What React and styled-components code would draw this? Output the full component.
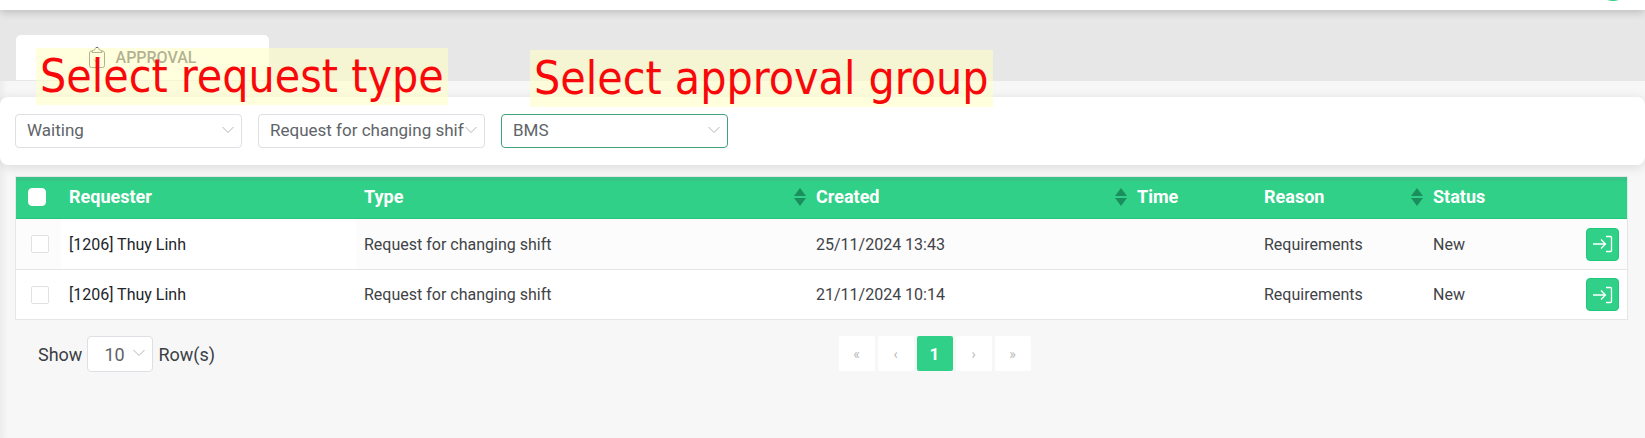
import styled, { createGlobalStyle } from 'styled-components'
import { useState } from 'react'

const GlobalStyle = createGlobalStyle`
  * {
    box-sizing: border-box;
  }
  body {
    margin: 0;
    background: #f7f7f7;
    color: #3b3f44;
    font-family: Roboto, "Liberation Sans", sans-serif;
    font-size: 16px;
  }
  button, select {
    font-family: inherit;
  }
`;

const Page = styled.div`
  position: relative;
  min-height: 100vh;
  background: linear-gradient(to right, #ededed, #f7f7f7 8px);
`;

const TopBar = styled.header`
  position: relative;
  display: flex;
  align-items: flex-end;
  justify-content: flex-end;
  height: 10px;
  padding: 0 16px 9px;
  background: white;
  box-shadow: 0 2px 8px rgba(0, 0, 0, 0.2);
`;

const Avatar = styled.div`
  flex: none;
  width: 32px;
  height: 32px;
  border-radius: 50%;
  background: #2fcf87;
`;

const TabBar = styled.nav`
  display: flex;
  padding: 25px 16px 1px;
  background: #e7e7e7;
`;

const Tab = styled.a`
  display: flex;
  align-items: flex-start;
  justify-content: center;
  gap: 11px;
  width: 253px;
  height: 45px;
  padding-top: 12px;
  border-radius: 5px 5px 0 0;
  background: white;
  color: #3f4040;
  font-weight: 500;
  line-height: 22px;
  text-decoration: none;
`;

const FilterCard = styled.section`
  display: flex;
  gap: 16px;
  margin-top: 16px;
  padding: 17px 15px;
  border-radius: 8px;
  background: white;
  box-shadow: 0 2px 12px rgba(0, 0, 0, 0.12);
`;

const SelectBox = styled.div`
  position: relative;
  width: ${(props) => props.$width};
  svg {
    position: absolute;
    top: 50%;
    right: 8px;
    margin-top: -5px;
    pointer-events: none;
  }
`;

const Select = styled.select`
  display: block;
  width: 100%;
  height: ${(props) => (props.$small ? '36px' : '34px')};
  padding: ${(props) => (props.$small ? '0 24px 0 16px' : '0 20px 2px 11px')};
  border: 1px solid ${(props) => (props.$active ? '#43a17a' : '#dcdfe3')};
  border-radius: 4px;
  outline: none;
  appearance: none;
  background: white;
  color: #606468;
  font-size: ${(props) => (props.$small ? '18px' : '17px')};
`;

const TableArea = styled.main`
  padding: 12px 18px 0 16px;
`;

const Table = styled.table`
  width: 100%;
  table-layout: fixed;
  border-collapse: separate;
  border-spacing: 0;
  background: white;
  box-shadow: 0 0 0 1px #e6e6e6;
`;

const Th = styled.th`
  height: 42px;
  padding: 0 2px 5px 8px;
  background: #31d088;
  border-top: 4px solid #36c586;
  border-bottom: 1px solid #22c67b;
  color: white;
  font-size: 18px;
  font-weight: 700;
  line-height: 20px;
  text-align: left;
`;

const ThInner = styled.div`
  display: flex;
  align-items: center;
  justify-content: space-between;
`;

const Row = styled.tr`
  background: ${(props) => (props.$striped ? '#fcfcfc' : 'white')};
`;

const Td = styled.td`
  height: 51px;
  padding: 0 8px;
  border-bottom: 1px solid #e6e6e6;
  color: ${(props) => (props.$dark ? '#222529' : '#3f4347')};
  background: ${(props) => (props.$dark ? 'white' : 'transparent')};
  tr:last-child > & {
    height: 49px;
    border-bottom: none;
  }
`;

const Check = styled.input`
  display: block;
  width: 18px;
  height: 18px;
  margin: 0 0 0 ${(props) => (props.$head ? '4px' : '7px')};
  appearance: none;
  border: 1px solid ${(props) => (props.$head ? 'white' : '#dfe1e4')};
  border-radius: ${(props) => (props.$head ? '4px' : '2px')};
  background: white;
  &:checked {
    background: #1a9c61;
  }
`;

const OpenButton = styled.button`
  display: flex;
  align-items: center;
  justify-content: center;
  width: 33px;
  height: 33px;
  padding: 0;
  border: 1px solid #1fc97b;
  border-radius: 4px;
  background: #31d088;
  color: white;
  cursor: pointer;
`;

const Footer = styled.footer`
  display: grid;
  grid-template-columns: 1fr 1fr;
  padding-top: 17px;
`;

const RowCount = styled.div`
  display: flex;
  align-items: center;
  gap: 5px;
  padding-left: 22px;
  font-size: 18px;
`;

const Pagination = styled.div`
  display: flex;
  gap: 3px;
  padding-left: 17px;
`;

const PageButton = styled.button`
  width: 36px;
  height: 35px;
  padding: 0;
  border: none;
  border-radius: 2px;
  background: ${(props) => (props.$current ? '#31d088' : 'white')};
  color: ${(props) => (props.$current ? 'white' : '#b9b9b9')};
  font-size: ${(props) => (props.$current ? '17px' : '14px')};
  font-weight: ${(props) => (props.$current ? '700' : '400')};
`;

const Note = styled.div`
  position: absolute;
  top: ${(props) => props.$top};
  left: ${(props) => props.$left};
  padding: 0 4px;
  background: rgba(255, 255, 200, 0.6);
  color: #f80808;
  font-family: "DejaVu Sans Condensed", "DejaVu Sans", sans-serif;
  font-size: 46px;
  line-height: 57px;
  white-space: nowrap;
`;

function ClipboardIcon() {
  return (
    <svg width="16" height="22" viewBox="0 0 16 22" fill="none" stroke="currentColor">
      <path d="M4 4H2.500A2 2 0 0 0 .5 6v12.500a2 2 0 0 0 2 2h11a2 2 0 0 0 2-2V6a2 2 0 0 0-2-2H12" />
      <path d="M3 5.500V4l3-1.500C6.300 .8 7 .5 8 .5s1.700 .3 2 2L13 4v1.500z" />
      <path d="M5 12.500l2 2 4-4" />
    </svg>
  );
}

function Chevron() {
  return (
    <svg width="12" height="8" viewBox="0 0 12 8" fill="none" stroke="#b0b4b8">
      <path d="M.5 1L6 6.500 11.500 1" />
    </svg>
  );
}

function SortIcon() {
  return (
    <svg width="12" height="18" viewBox="0 0 12 18" fill="#1a8f5d">
      <path d="M6 0l6 8H0zM6 18l6-8H0z" />
    </svg>
  );
}

function EnterIcon() {
  return (
    <svg width="20" height="18" viewBox="0 0 20 18" fill="none" stroke="currentColor" strokeWidth="1.300">
      <path d="M0 9h12M8 4.500L12.500 9 8 13.500M13 1.500h4.500a1 1 0 0 1 1 1v13a1 1 0 0 1-1 1H13" />
    </svg>
  );
}

const columns = [
  { title: 'Requester', width: 295 },
  { title: 'Type', width: 452, sort: true },
  { title: 'Created', width: 321, sort: true },
  { title: 'Time', width: 127 },
  { title: 'Reason', width: 169, sort: true },
  { title: 'Status', width: 153 },
];

const requests = [
  { id: 1, requester: '[1206] Thuy Linh', type: 'Request for changing shift', created: '25/11/2024 13:43', time: '', reason: 'Requirements', status: 'New' },
  { id: 2, requester: '[1206] Thuy Linh', type: 'Request for changing shift', created: '21/11/2024 10:14', time: '', reason: 'Requirements', status: 'New' },
];

function App() {
  const [checked, setChecked] = useState([]);

  const handleCheck = (id) => {
    setChecked(checked.includes(id) ? checked.filter((c) => c !== id) : [...checked, id]);
  }

  const handleCheckAll = (e) => {
    setChecked(e.target.checked ? requests.map((r) => r.id) : []);
  }

  return (
    <Page>
      <GlobalStyle />
      <TopBar><Avatar /></TopBar>
      <TabBar>
        <Tab href="#approval"><ClipboardIcon />APPROVAL</Tab>
      </TabBar>
      <FilterCard>
        <SelectBox $width="227px">
          <Select aria-label="Request status"><option>Waiting</option></Select>
          <Chevron />
        </SelectBox>
        <SelectBox $width="227px">
          <Select aria-label="Request type"><option>Request for changing shift</option></Select>
          <Chevron />
        </SelectBox>
        <SelectBox $width="227px">
          <Select aria-label="Approval group" $active><option>BMS</option></Select>
          <Chevron />
        </SelectBox>
      </FilterCard>
      <TableArea>
        <Table>
          <colgroup>
            <col width="45" />
            {columns.map((c) => <col key={c.title} width={c.width} />)}
            <col width="49" />
          </colgroup>
          <thead>
            <tr>
              <Th>
                <Check type="checkbox" $head aria-label="Select all" checked={checked.length === requests.length} onChange={handleCheckAll} />
              </Th>
              {columns.map((c) => (
                <Th key={c.title}>
                  <ThInner>{c.title}{c.sort && <SortIcon />}</ThInner>
                </Th>
              ))}
              <Th />
            </tr>
          </thead>
          <tbody>
            {requests.map((r, i) => (
              <Row key={r.id} $striped={i % 2 === 0}>
                <Td>
                  <Check type="checkbox" aria-label={`Select request ${r.id}`} checked={checked.includes(r.id)} onChange={() => handleCheck(r.id)} />
                </Td>
                <Td $dark>{r.requester}</Td>
                <Td>{r.type}</Td>
                <Td>{r.created}</Td>
                <Td>{r.time}</Td>
                <Td>{r.reason}</Td>
                <Td>{r.status}</Td>
                <Td>
                  <OpenButton aria-label="Open request"><EnterIcon /></OpenButton>
                </Td>
              </Row>
            ))}
          </tbody>
        </Table>
        <Footer>
          <RowCount>
            <label htmlFor="rows">Show</label>
            <SelectBox $width="66px">
              <Select id="rows" $small><option>10</option></Select>
              <Chevron />
            </SelectBox>
            <span>Row(s)</span>
          </RowCount>
          <Pagination>
            <PageButton aria-label="First page">«</PageButton>
            <PageButton aria-label="Previous page">‹</PageButton>
            <PageButton $current>1</PageButton>
            <PageButton aria-label="Next page">›</PageButton>
            <PageButton aria-label="Last page">»</PageButton>
          </Pagination>
        </Footer>
      </TableArea>
      <Note $top="48px" $left="36px">Select request type</Note>
      <Note $top="50px" $left="530px">Select approval group</Note>
    </Page>
  );
}

export default App;
